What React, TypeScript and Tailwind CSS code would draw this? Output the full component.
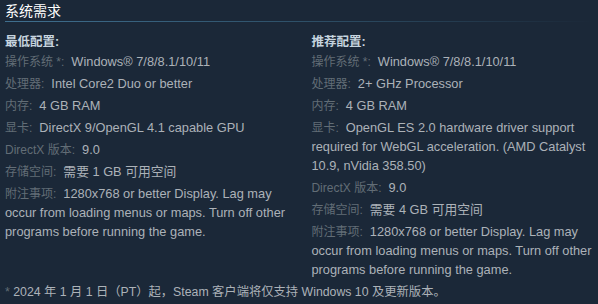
import React from "react";

type Row = { label: string; value: string };

const minRows: Row[] = [
  { label: "操作系统 *:", value: "Windows® 7/8/8.1/10/11" },
  { label: "处理器:", value: "Intel Core2 Duo or better" },
  { label: "内存:", value: "4 GB RAM" },
  { label: "显卡:", value: "DirectX 9/OpenGL 4.1 capable GPU" },
  { label: "DirectX 版本:", value: "9.0" },
  { label: "存储空间:", value: "需要 1 GB 可用空间" },
  {
    label: "附注事项:",
    value:
      "1280x768 or better Display. Lag may occur from loading menus or maps. Turn off other programs before running the game.",
  },
];

const recRows: Row[] = [
  { label: "操作系统 *:", value: "Windows® 7/8/8.1/10/11" },
  { label: "处理器:", value: "2+ GHz Processor" },
  { label: "内存:", value: "4 GB RAM" },
  {
    label: "显卡:",
    value:
      "OpenGL ES 2.0 hardware driver support required for WebGL acceleration. (AMD Catalyst 10.9, nVidia 358.50)",
  },
  { label: "DirectX 版本:", value: "9.0" },
  { label: "存储空间:", value: "需要 4 GB 可用空间" },
  {
    label: "附注事项:",
    value:
      "1280x768 or better Display. Lag may occur from loading menus or maps. Turn off other programs before running the game.",
  },
];

function Col({ title, rows }: { title: string; rows: Row[] }) {
  return (
    <div className="w-[288px]">
      <div className="text-[12.5px] leading-[19px] font-bold text-[#c6d4df]">{title}</div>
      <ul>
        {rows.map((r, i) => (
          <li key={i} className="text-[12.8px] leading-[19px] mb-[3px] text-[#acb2b8]">
            <span className="text-[12px] leading-[12px] mr-[7px] text-[#626d76]">{r.label}</span>
            {r.value}
          </li>
        ))}
      </ul>
    </div>
  );
}

export default function App() {
  return (
    <div
      className="w-[598px] h-[304px] bg-[#1b2838] pl-[5px] overflow-hidden"
      style={{ fontFamily: '"Liberation Sans", Arial, "Noto Sans CJK SC", sans-serif' }}
    >
      <h2 className="text-[14px] leading-[20px] text-white pt-[1px]">系统需求</h2>
      <div className="h-px w-[588px] bg-gradient-to-r from-[#3f6f8f] via-[#2e5068] to-transparent" />
      <div className="flex mt-[11px]">
        <Col title="最低配置:" rows={minRows} />
        <div className="w-[20px]" />
        <Col title="推荐配置:" rows={recRows} />
      </div>
      <div className="text-[12.3px] leading-[18px] text-[#acb2b8] mt-[1px]">
        <span className="text-[#626d76]">*</span> 2024 年 1 月 1 日（PT）起，Steam 客户端将仅支持 Windows 10 及更新版本。
      </div>
    </div>
  );
}
